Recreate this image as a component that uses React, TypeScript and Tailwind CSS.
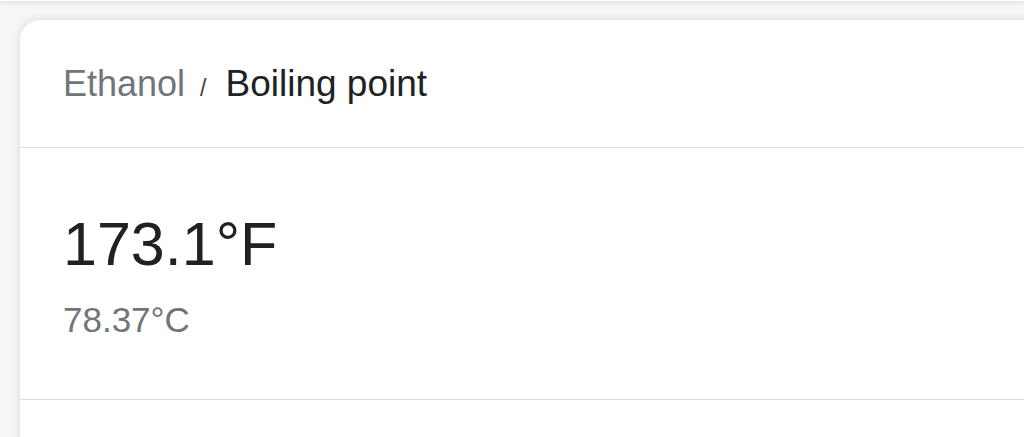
import React from "react";

export default function App() {
  return (
    <div className="relative h-[437px] w-[1024px] overflow-hidden bg-[#f6f6f6] font-['Liberation_Sans',Arial,sans-serif]">
      {/* edge of the card above */}
      <div className="absolute left-0 right-0 top-[-30px] h-[31px] bg-white shadow-[0_1px_6px_rgba(0,0,0,0.12)]" />

      <div className="ml-[20px] mt-[20px] w-[1040px] rounded-tl-[20px] rounded-tr-[20px] bg-white shadow-[0_0_10px_rgba(0,0,0,0.13)]">
        <div className="flex h-[128px] items-center border-b border-[#dadce0] pl-[43px]">
          <div className="flex items-baseline">
            <span className="text-[36px] leading-none text-[#70757a]">Ethanol</span>
            <span className="ml-[15px] mr-[19px] text-[23px] leading-none text-[#3c4043]">/</span>
            <span className="text-[37px] leading-none text-[#202124]">Boiling point</span>
          </div>
        </div>

        <div className="h-[252px] border-b border-[#dadce0] pl-[43px] pt-[66px]">
          <div className="text-[61px] leading-[60px] text-[#202124]">173.1°F</div>
          <div className="mt-[28px] text-[35px] leading-[35px] text-[#70757a]">78.37°C</div>
        </div>

        <div className="h-[60px]" />
      </div>
    </div>
  );
}
